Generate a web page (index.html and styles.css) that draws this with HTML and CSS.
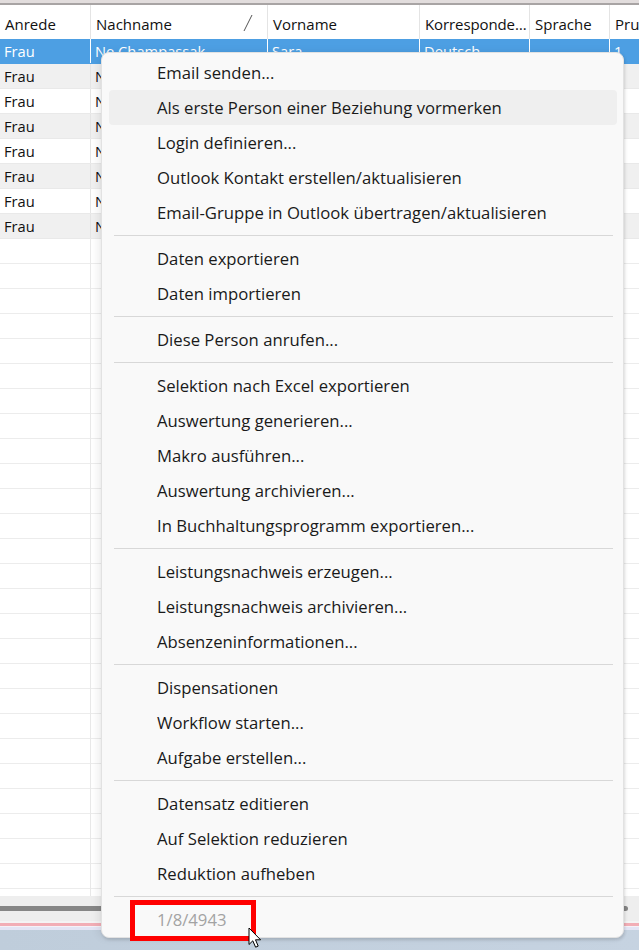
FILE: index.html
```html
<!DOCTYPE html>
<html lang="de">
<head>
<meta charset="utf-8">
<title>Personen</title>
<link rel="stylesheet" href="styles.css">
</head>
<body>
<div class="screen">
  <div class="topbar"></div>

  <div class="table">
    <div class="row head">
      <div class="cell c1">Anrede</div>
      <div class="cell c2"><span>Nachname</span>
        <svg class="sort" width="10" height="18" viewBox="0 0 10 18"><line x1="9" y1="1" x2="1" y2="17" stroke="#555" stroke-width="1"/></svg>
      </div>
      <div class="cell c3">Vorname</div>
      <div class="cell c4"><span class="clip">Korrespondenzsprache</span></div>
      <div class="cell c5">Sprache</div>
      <div class="cell c6">Pruefung</div>
    </div>

    <div class="row sel">
      <div class="cell c1">Frau</div>
      <div class="cell c2">Ne Champassak</div>
      <div class="cell c3">Sara</div>
      <div class="cell c4">Deutsch</div>
      <div class="cell c5"></div>
      <div class="cell c6">1</div>
    </div>
    <div class="row alt">
      <div class="cell c1">Frau</div><div class="cell c2">Nef</div><div class="cell c3">Monika</div><div class="cell c4">Deutsch</div><div class="cell c5"></div><div class="cell c6">1</div>
    </div>
    <div class="row">
      <div class="cell c1">Frau</div><div class="cell c2">Neuhaus</div><div class="cell c3">Claudia</div><div class="cell c4">Deutsch</div><div class="cell c5"></div><div class="cell c6">1</div>
    </div>
    <div class="row alt">
      <div class="cell c1">Frau</div><div class="cell c2">Niederer</div><div class="cell c3">Andrea</div><div class="cell c4">Deutsch</div><div class="cell c5"></div><div class="cell c6">1</div>
    </div>
    <div class="row">
      <div class="cell c1">Frau</div><div class="cell c2">Nussbaum</div><div class="cell c3">Ruth</div><div class="cell c4">Deutsch</div><div class="cell c5"></div><div class="cell c6">1</div>
    </div>
    <div class="row alt">
      <div class="cell c1">Frau</div><div class="cell c2">Nägeli</div><div class="cell c3">Barbara</div><div class="cell c4">Deutsch</div><div class="cell c5"></div><div class="cell c6">1</div>
    </div>
    <div class="row">
      <div class="cell c1">Frau</div><div class="cell c2">Nyffeler</div><div class="cell c3">Karin</div><div class="cell c4">Deutsch</div><div class="cell c5"></div><div class="cell c6">1</div>
    </div>
    <div class="row alt">
      <div class="cell c1">Frau</div><div class="cell c2">Nock</div><div class="cell c3">Esther</div><div class="cell c4">Deutsch</div><div class="cell c5"></div><div class="cell c6">1</div>
    </div>

    <!-- empty grid area below the last record -->
    <div class="filler">
      <div class="fcol c1"></div>
      <div class="fcol c2"></div>
      <div class="fcol c3"></div>
      <div class="fcol c4"></div>
      <div class="fcol c5"></div>
      <div class="fcol c6"></div>
    </div>
  </div>

  <div class="hscroll"><div class="thumb"></div></div>
  <div class="statuslines"></div>
  <div class="desk"></div>

  <!-- context menu of the selected record -->
  <div class="menu">
    <div class="item">Email senden...</div>
    <div class="item hover">Als erste Person einer Beziehung vormerken</div>
    <div class="item">Login definieren...</div>
    <div class="item">Outlook Kontakt erstellen/aktualisieren</div>
    <div class="item">Email-Gruppe in Outlook übertragen/aktualisieren</div>
    <div class="sep"></div>
    <div class="item">Daten exportieren</div>
    <div class="item">Daten importieren</div>
    <div class="sep"></div>
    <div class="item">Diese Person anrufen...</div>
    <div class="sep"></div>
    <div class="item">Selektion nach Excel exportieren</div>
    <div class="item">Auswertung generieren...</div>
    <div class="item">Makro ausführen...</div>
    <div class="item">Auswertung archivieren...</div>
    <div class="item">In Buchhaltungsprogramm exportieren...</div>
    <div class="sep"></div>
    <div class="item">Leistungsnachweis erzeugen...</div>
    <div class="item">Leistungsnachweis archivieren...</div>
    <div class="item">Absenzeninformationen...</div>
    <div class="sep"></div>
    <div class="item">Dispensationen</div>
    <div class="item">Workflow starten...</div>
    <div class="item">Aufgabe erstellen...</div>
    <div class="sep"></div>
    <div class="item">Datensatz editieren</div>
    <div class="item">Auf Selektion reduzieren</div>
    <div class="item">Reduktion aufheben</div>
    <div class="sep"></div>
    <div class="item disabled">1/8/4943</div>
  </div>

  <div class="mark"></div>

  <svg class="cursor" width="14" height="22" viewBox="0 0 14 22">
    <path d="M1 1 L1 17.5 L4.8 13.8 L7.6 20.2 L10.2 19.1 L7.5 12.8 L12.6 12.8 Z" fill="#fff" stroke="#000" stroke-width="1" stroke-linejoin="miter"/>
  </svg>
</div>
</body>
</html>
```

FILE: styles.css
```css
html, body {
  margin: 0;
  padding: 0;
  background: #ffffff;
}

.screen {
  position: relative;
  width: 639px;
  height: 950px;
  overflow: hidden;
  display: flex;
  flex-direction: column;
  font-family: "Open Sans", "Noto Sans", sans-serif;
}

.topbar {
  height: 3px;
  background: #e2dddd;
  border-bottom: 2px solid #a8a4a4;
  flex: none;
}

/* ---------- data grid ---------- */
.table {
  flex: none;
  height: 891px;
  display: flex;
  flex-direction: column;
  overflow: hidden;
  font-size: 14.7px;
  color: #111111;
}

.row {
  display: flex;
  height: 25px;
  flex: none;
  background: #ffffff;
  box-sizing: border-box;
  border-bottom: 1px solid #e9e9e9;
}

.row.alt {
  background: #f0f0f0;
}

.row.sel {
  background: #4d9fe3;
  color: #ffffff;
  border-bottom-color: #4d9fe3;
}

.row.head {
  height: 34px;
  padding-top: 4px;
  border-bottom: none;
  background: #ffffff;
}

.cell {
  flex: none;
  box-sizing: border-box;
  padding: 1px 0 0 4px;
  line-height: 23px;
  white-space: nowrap;
  overflow: hidden;
  border-right: 1px solid #e4e4e4;
}

.row.head .cell {
  padding: 4px 0 0 5px;
  margin-top: -4px;
  line-height: 30px;
  display: flex;
  align-items: center;
  font-size: 15px;
}

.row.sel .cell {
  border-right-color: #ffffff;
}

.c1 { width: 91px; }
.c2 { width: 177px; }
.c3 { width: 152px; }
.c4 { width: 110px; }
.c5 { width: 80px; }
.c6 { width: 100px; border-right: none; }

.row.head .c2 .sort {
  margin-left: auto;
  margin-right: 14px;
  margin-top: -2px;
}

.clip {
  display: block;
  overflow: hidden;
  text-overflow: ellipsis;
  white-space: nowrap;
  max-width: 104px;
  letter-spacing: -0.1px;
}

.filler {
  flex: 1;
  display: flex;
}

.fcol {
  flex: none;
  box-sizing: border-box;
  border-right: 1px solid #e8e8e8;
  background: repeating-linear-gradient(to bottom, #ffffff 0 24px, #ececec 24px 25px);
}

.fcol.c6 {
  border-right: none;
}

/* ---------- horizontal scrollbar and window edge ---------- */
.hscroll {
  flex: none;
  height: 25px;
  background: #eeeeee;
  box-sizing: border-box;
  padding-top: 10px;
}

.thumb {
  width: 628px;
  height: 5px;
  background: #868686;
  border-radius: 0 3px 3px 0;
}

.statuslines {
  flex: none;
  height: 9px;
  box-sizing: border-box;
  background: #e3e5f5;
  border-top: 1px solid #f4f4f4;
  box-shadow: inset 0 1px 0 #f4f4f4, inset 0 4px 0 #f2aeb6, inset 0 5px 0 #f4f2f8;
}

.desk {
  flex: 1;
  background: linear-gradient(to right, #bfcddb, #c6d3e1);
}

/* ---------- context menu ---------- */
.menu {
  position: absolute;
  left: 101px;
  top: 52px;
  width: 523px;
  height: 886px;
  box-sizing: border-box;
  padding-top: 2px;
  background: #f9f9f9;
  border: 1px solid #e2e2e2;
  border-radius: 8px;
  box-shadow: 1px 2px 3px rgba(0, 0, 0, 0.12), -3px 0 9px rgba(0, 0, 0, 0.07);
  font-size: 16.7px;
  color: #1a1a1a;
  overflow: hidden;
}

.item {
  height: 35px;
  line-height: 35px;
  margin: 0 6px 0 7px;
  padding-left: 48px;
  border-radius: 4px;
  white-space: nowrap;
}

.item.hover {
  background: #efefef;
}

.item.disabled {
  color: #a3a3a3;
}

.sep {
  height: 1px;
  margin: 5px 10px 5px 12px;
  background: #d8d8d8;
}

/* red marking frame around the record counter */
.mark {
  position: absolute;
  left: 130px;
  top: 900px;
  width: 126px;
  height: 41px;
  box-sizing: border-box;
  border: 5px solid #ff0000;
}

.cursor {
  position: absolute;
  left: 248px;
  top: 927px;
}
```
